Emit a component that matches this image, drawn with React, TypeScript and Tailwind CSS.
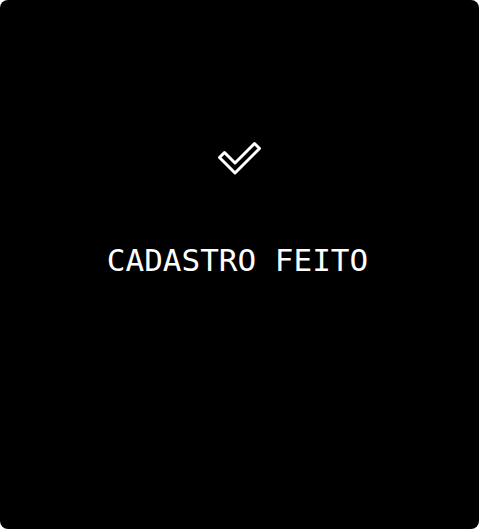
export default function App() {
  return (
    <div className="w-[479px] h-[531px] bg-white">
      <div className="w-[479px] h-[529px] rounded-lg bg-black flex flex-col items-center pt-[138px]">
        <svg
          width="48"
          height="38"
          viewBox="0 0 48 38"
          fill="none"
          stroke="white"
          strokeWidth="3"
          strokeLinejoin="round"
        >
          <path d="M8.5 14.5 L19 25 L38.5 5.5 L43.5 10.5 L19 35 L3.5 19.5 Z" />
        </svg>
        <p className="mt-[69px] mr-[4px] text-white text-[31px] leading-none font-medium font-['DejaVu_Sans_Mono',monospace]">
          CADASTRO FEITO
        </p>
      </div>
    </div>
  )
}
